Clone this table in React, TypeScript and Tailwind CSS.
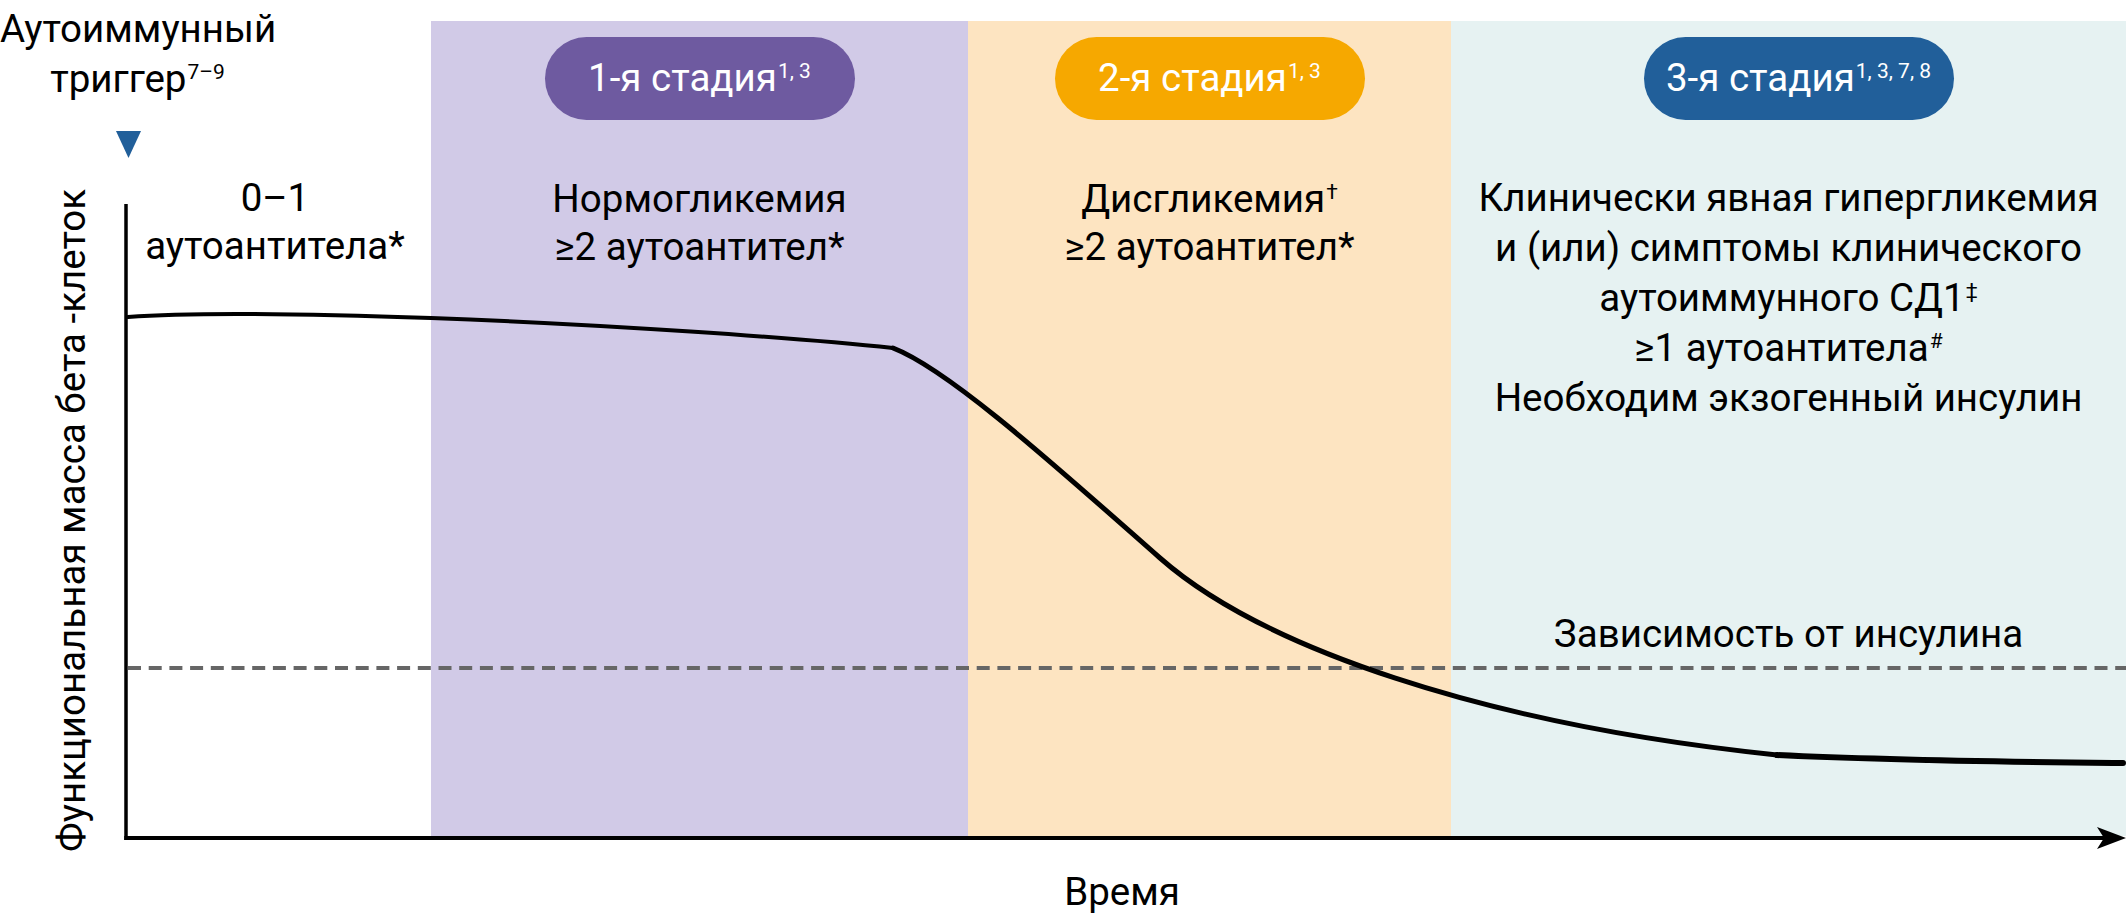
import React from 'react'

const Sup = ({ children }: { children: React.ReactNode }) => (
  <sup className="text-[21px] -top-[13px] ml-[1px]">{children}</sup>
)

const Badge = ({ color, shift, children }: { color: string; shift?: string; children: React.ReactNode }) => (
  <div
    className={`mt-[16px] flex h-[83px] w-[310px] items-center justify-center rounded-full text-white leading-none whitespace-nowrap ${color} ${shift ?? ''}`}
  >
    <span>{children}</span>
  </div>
)

const Curve = () => (
  <svg
    className="pointer-events-none absolute inset-0"
    width="2126"
    height="916"
    viewBox="0 0 2126 916"
  >
    {/* axes */}
    <line x1="126" y1="204" x2="126" y2="840" stroke="#000" strokeWidth="3.5" />
    <line x1="124.25" y1="838" x2="2104" y2="838" stroke="#000" strokeWidth="4" />
    <path d="M2126 838 L2097 827 L2104 838 L2097 849 Z" fill="#000" />

    {/* insulin threshold */}
    <line
      x1="128"
      y1="668"
      x2="2126"
      y2="668"
      stroke="#666666"
      strokeWidth="4"
      strokeDasharray="13 7.7"
    />

    {/* beta-cell mass */}
    <path
      d="M128 317 C180 313 260 312 431 318 C600 324 800 338 893 348"
      fill="none"
      stroke="#000"
      strokeWidth="4"
      strokeLinecap="round"
    />
    <path
      d="M893 348 C950 370 1060 470 1160 558 C1260 646 1480 724 1777 755"
      fill="none"
      stroke="#000"
      strokeWidth="5"
      strokeLinecap="round"
    />
    <path
      d="M1777 755 C1900 761 2020 762 2123 763"
      fill="none"
      stroke="#000"
      strokeWidth="6"
      strokeLinecap="round"
    />
  </svg>
)

export default function App() {
  return (
    <div className="relative h-[916px] w-[2126px] overflow-hidden bg-white font-['Roboto','Liberation_Sans',sans-serif] text-[38.5px] text-black">
      <div className="grid h-[836px] grid-cols-[431px_537px_483px_675px]">
        {/* before stage 1 */}
        <div className="flex flex-col">
          <div className="mt-[4px] w-[275px] text-center leading-[50px] whitespace-nowrap">
            <div>Аутоиммунный</div>
            <div>
              триггер<Sup>7–9</Sup>
            </div>
          </div>
          <svg className="ml-[116px] mt-[27px] block" width="25" height="27" viewBox="0 0 25 27">
            <polygon points="0,0 25,0 12.5,27" fill="#215f9a" />
          </svg>
          <div className="ml-[125px] mt-[16px] w-[300px] text-center leading-[48px] whitespace-nowrap">
            <div>0–1</div>
            <div>аутоантитела*</div>
          </div>
        </div>

        {/* stage 1 */}
        <div className="mt-[21px] flex flex-col items-center bg-[#d1cae7]">
          <Badge color="bg-[#6e5aa0]">
            1-я стадия<Sup>1, 3</Sup>
          </Badge>
          <div className="mt-[55px] text-center leading-[48px] whitespace-nowrap">
            <div>Нормогликемия</div>
            <div>≥2 аутоантител*</div>
          </div>
        </div>

        {/* stage 2 */}
        <div className="mt-[21px] flex flex-col items-center bg-[#fde4c1]">
          <Badge color="bg-[#f6a800]">
            2-я стадия<Sup>1, 3</Sup>
          </Badge>
          <div className="mt-[55px] text-center leading-[48px] whitespace-nowrap">
            <div>
              Дисгликемия<Sup>†</Sup>
            </div>
            <div>≥2 аутоантител*</div>
          </div>
        </div>

        {/* stage 3 */}
        <div className="mt-[21px] flex flex-col items-center bg-[#e6f2f2]">
          <Badge color="bg-[#215f9a]" shift="ml-[20px]">
            3-я стадия<Sup>1, 3, 7, 8</Sup>
          </Badge>
          <div className="mt-[53px] text-center leading-[50px] whitespace-nowrap">
            <div>Клинически явная гипергликемия</div>
            <div>и (или) симптомы клинического</div>
            <div>
              аутоиммунного СД1<Sup>‡</Sup>
            </div>
            <div>
              ≥1 аутоантитела<Sup>#</Sup>
            </div>
            <div>Необходим экзогенный инсулин</div>
          </div>
          <div className="mt-[187px] leading-[48px] whitespace-nowrap">Зависимость от инсулина</div>
        </div>
      </div>

      <div className="mt-[32px] pl-[118px] text-center leading-[48px]">Время</div>

      <Curve />

      {/* y-axis title */}
      <div className="absolute bottom-[64px] left-[48px] rotate-180 whitespace-nowrap leading-[48px] [writing-mode:vertical-rl]">
        Функциональная масса бета -клеток
      </div>
    </div>
  )
}
